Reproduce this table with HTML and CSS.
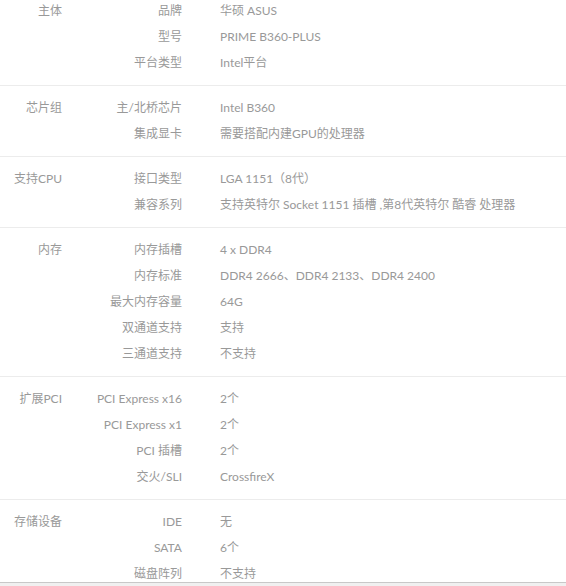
FILE: index.html
```html
<!DOCTYPE html>
<html lang="zh-CN">
<head>
    <meta charset="UTF-8">
    <meta name="viewport" content="width=device-width, initial-scale=1.0">
    <title>参数</title>
    <link rel="stylesheet" href="styles.css">
</head>
<body>
    <div class="specs">
        <div class="group">
            <div class="cat">主体</div>
            <div class="items">
                <div class="row"><span class="label">品牌</span><span class="value">华硕 ASUS</span></div>
                <div class="row"><span class="label">型号</span><span class="value">PRIME B360-PLUS</span></div>
                <div class="row"><span class="label">平台类型</span><span class="value">Intel平台</span></div>
            </div>
        </div>
        <div class="group">
            <div class="cat">芯片组</div>
            <div class="items">
                <div class="row"><span class="label">主/北桥芯片</span><span class="value">Intel B360</span></div>
                <div class="row"><span class="label">集成显卡</span><span class="value">需要搭配内建GPU的处理器</span></div>
            </div>
        </div>
        <div class="group">
            <div class="cat">支持CPU</div>
            <div class="items">
                <div class="row"><span class="label">接口类型</span><span class="value">LGA 1151（8代）</span></div>
                <div class="row"><span class="label">兼容系列</span><span class="value">支持英特尔 Socket 1151 插槽 ,第8代英特尔 酷睿 处理器</span></div>
            </div>
        </div>
        <div class="group">
            <div class="cat">内存</div>
            <div class="items">
                <div class="row"><span class="label">内存插槽</span><span class="value">4 x DDR4</span></div>
                <div class="row"><span class="label">内存标准</span><span class="value">DDR4 2666、DDR4 2133、DDR4 2400</span></div>
                <div class="row"><span class="label">最大内存容量</span><span class="value">64G</span></div>
                <div class="row"><span class="label">双通道支持</span><span class="value">支持</span></div>
                <div class="row"><span class="label">三通道支持</span><span class="value">不支持</span></div>
            </div>
        </div>
        <div class="group">
            <div class="cat">扩展PCI</div>
            <div class="items">
                <div class="row"><span class="label">PCI Express x16</span><span class="value">2个</span></div>
                <div class="row"><span class="label">PCI Express x1</span><span class="value">2个</span></div>
                <div class="row"><span class="label">PCI 插槽</span><span class="value">2个</span></div>
                <div class="row"><span class="label">交火/SLI</span><span class="value">CrossfireX</span></div>
            </div>
        </div>
        <div class="group">
            <div class="cat">存储设备</div>
            <div class="items">
                <div class="row"><span class="label">IDE</span><span class="value">无</span></div>
                <div class="row"><span class="label">SATA</span><span class="value">6个</span></div>
                <div class="row"><span class="label">磁盘阵列</span><span class="value">不支持</span></div>
            </div>
        </div>
    </div>
    <div class="bottomBar"></div>
</body>
</html>
```

FILE: styles.css
```css
* {
    margin: 0;
    padding: 0;
    box-sizing: border-box;
}

body {
    font-family: 'Lato', 'Noto Sans CJK SC', sans-serif;
    font-size: 12px;
    color: #999;
    background: #fff;
    overflow: hidden;
}

.specs {
    margin-top: -11px;
}

.group {
    display: flex;
    padding: 9px 0;
    border-bottom: 1px solid #ececec;
}

.cat {
    width: 62px;
    text-align: right;
    line-height: 26px;
    white-space: nowrap;
}

.items {
    flex: 1;
}

.row {
    display: flex;
    height: 26px;
    line-height: 26px;
    white-space: nowrap;
}

.label {
    width: 120px;
    text-align: right;
}

.value {
    padding-left: 38px;
}

.bottomBar {
    position: fixed;
    left: 0;
    right: 0;
    bottom: 0;
    height: 4px;
    border-top: 1px solid #c8c8c8;
    background: #f0f0f0;
}
```
